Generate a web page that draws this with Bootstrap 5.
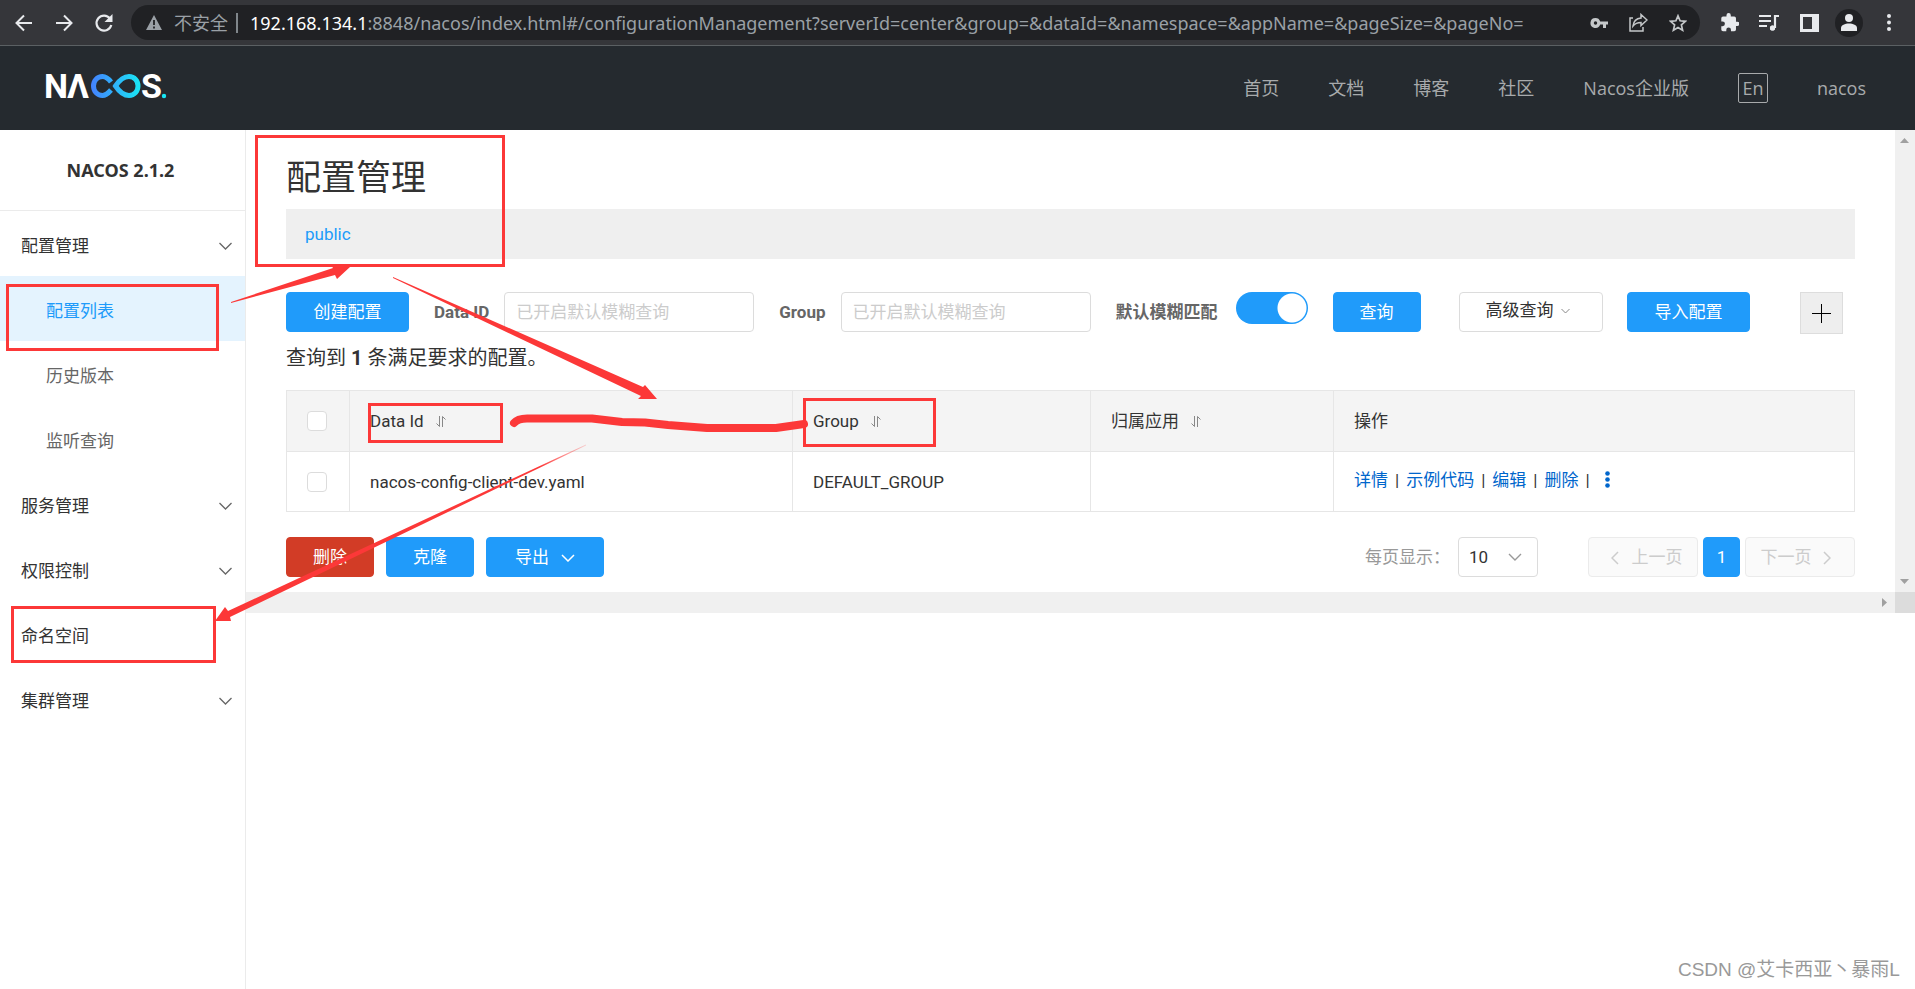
<!DOCTYPE html>
<html lang="zh-CN">
<head>
<meta charset="utf-8">
<meta name="viewport" content="width=device-width, initial-scale=1">
<title>Nacos</title>
<link href="https://cdn.jsdelivr.net/npm/bootstrap@5.3.0/dist/css/bootstrap.min.css" rel="stylesheet">
<style>
  :root { --brand: #209bfa; --line: #e6e6e6; }
  body { font-family: Roboto, "Noto Sans CJK SC", sans-serif; font-size: 17px; line-height: 24px; color: #333; background: #fff; }
  a { text-decoration: none; }
  svg { display: block; flex: none; }

  /* browser toolbar */
  .toolbar { height: 46px; background: #35363a; border-bottom: 1px solid #5b6063; color: #e8eaed; padding: 5px 24px 5px 14px; font-family: "Noto Sans", "Noto Sans CJK SC", sans-serif; }
  .toolbar button { background: none; border: 0; padding: 0; color: inherit; }
  .omnibox { height: 35px; border-radius: 18px; background: #202124; color: #9aa0a6; padding: 0 13px 0 15px; margin-left: 17px; font-size: 18px; }
  .omnibox .host { color: #fff; }
  .omnibox .sep { width: 2px; height: 20px; background: #80868b; }
  .omni-icons { gap: 21px; }
  .avatar { width: 28px; height: 28px; background: #202124; }

  /* site header */
  .site-head { height: 84px; background: #252a2f; padding: 0 49px 0 41px; }
  .site-head a, .site-head button { color: #a8aaac; font-size: 18px; font-family: "Open Sans", "Noto Sans CJK SC", sans-serif; white-space: nowrap; }
  .site-head .site-nav { gap: 49px; }
  .lang-btn { width: 30px; height: 30px; border: 1px solid #a8aaac; border-radius: 2px; background: none; padding: 0; line-height: 26px; }

  /* side menu */
  .side { width: 246px; flex: none; border-right: 1px solid #ebebeb; }
  .side h1 { height: 81px; margin: 0; padding-right: 4px; border-bottom: 1px solid #ebebeb; font: 700 18px "Noto Sans", sans-serif; }
  .side a { height: 65px; padding: 4px 13px 0 21px; color: #333; }
  .side a.sub { padding-left: 46px; color: #666; }
  .side a.active { background: #e4f3fe; color: var(--brand); }

  /* content */
  .pane { flex: 1 1 0; min-width: 0; padding: 29px 40px 15px; }
  .pane h2 { font-size: 35px; line-height: 40px; margin: 0 0 10px; font-weight: 400; }
  .ns-bar { height: 50px; background: #efefef; padding: 0 19px; margin-bottom: 33px; }
  .ns-bar a { color: var(--brand); }
  .btn { --bs-btn-font-size: 17px; --bs-btn-border-radius: 4px; --bs-btn-padding-y: 0; --bs-btn-padding-x: 0; height: 40px; padding-top: 2px; white-space: nowrap; }
  .btn-blue { --bs-btn-bg: #209bfa; --bs-btn-color: #fff; --bs-btn-border-color: #209bfa; --bs-btn-hover-bg: #1284dc; --bs-btn-hover-color: #fff; }
  .btn-red { --bs-btn-bg: #d23c26; --bs-btn-color: #fff; --bs-btn-border-color: #d23c26; --bs-btn-hover-bg: #b7321e; --bs-btn-hover-color: #fff; }
  .btn-plain { --bs-btn-bg: #fff; --bs-btn-color: #333; --bs-btn-border-color: #dcdcdc; padding: 0 6px 2px 0; }
  .w-short { width: 88px; }
  .w-mid { width: 118px; }
  .w-long { width: 123px; }
  .w-drop { width: 144px; }
  .field-label { color: #666; font-weight: 700; white-space: nowrap; margin: 0 15px 0 25px; }
  .field { width: 250px; height: 40px; border: 1px solid #dcdcdc; border-radius: 4px; padding: 0 11px; font-size: 17px; }
  .field::placeholder { color: #ccc; opacity: 1; }
  .form-check-input.fuzzy { width: 72px; height: 32px; margin: 0 25px 0 3px; border: 0; border-radius: 16px; flex: none;
    background: radial-gradient(circle at 56px 16px, #fff 14px, transparent 15px) var(--brand); }
  .plus-btn { width: 43px; height: 42px; margin: 0 12px 0 50px; background: #eee; border: 1px solid #ddd; padding: 0; }
  .found { font-size: 20px; line-height: 30px; margin: 9px 0 17px; }

  .grid-table { table-layout: fixed; border: 1px solid var(--line); margin: 0 0 25px; }
  .grid-table th, .grid-table td { height: 60px; padding: 0 20px; font-weight: 400; vertical-align: middle; border: 1px solid var(--line); color: #333; }
  .grid-table thead th { background: #f4f4f4; height: 61px; }
  .grid-table a { color: #06c; }
  .grid-table .form-check-input { width: 20px; height: 20px; margin: 0; border: 1px solid #dcdcdc; border-radius: 4px; display: block; }
  .c-check { width: 63px; } .c-id { width: 443px; } .c-group { width: 298px; } .c-app { width: 243px; }
  .row-actions { gap: 7px; }

  .batch { gap: 12px; }
  .with-icon { gap: 12px; }
  .size-label { color: #999; }
  .size-select { width: 80px; height: 40px; border: 1px solid #dcdcdc; border-radius: 4px; padding: 0 10px; margin: 0 50px 0 8px; color: #333; font-size: 17px;
    background: #fff url("data:image/svg+xml,%3Csvg xmlns='http://www.w3.org/2000/svg' width='14' height='8' fill='none' stroke='%23999' stroke-width='1.4'%3E%3Cpath d='M1 1l6 6 6-6'/%3E%3C/svg%3E") no-repeat right 15px center; appearance: none; }
  .pages { gap: 5px; }
  .pages .btn-step { width: 110px; --bs-btn-disabled-bg: #fafafa; --bs-btn-disabled-color: #ccc; --bs-btn-disabled-border-color: #ebebeb; --bs-btn-disabled-opacity: 1; }
  .pages .step-prev { padding-left: 8px; }
  .pages .step-next { padding-right: 8px; }
  .pages .btn-page { width: 37px; }

  .vbar { width: 20px; flex: none; background: #f0f0f0; padding: 8px 0; color: #a0a0a0; }
  .hbar { height: 21px; background: #f0f0f0; color: #a0a0a0; }
  .corner { width: 20px; background: #dcdcdc; }
  .watermark { color: #999; font-family: "Liberation Sans", "Noto Sans CJK SC", sans-serif; font-size: 19px; padding: 0 15px 7px; }
  .notes { position: absolute; left: 0; top: 0; pointer-events: none; }
</style>
</head>
<body class="d-flex flex-column min-vh-100 position-relative">

<div class="toolbar d-flex align-items-center">
  <button aria-label="后退"><svg width="20" height="20" viewBox="0 0 20 20" fill="none" stroke="currentColor" stroke-width="2"><path d="M18 10H3M10 2.500 2.500 10 10 17.500"/></svg></button>
  <button aria-label="前进" class="ms-3 ps-1"><svg width="20" height="20" viewBox="0 0 20 20" fill="none" stroke="currentColor" stroke-width="2"><path d="M2 10H17M10 2.500 17.500 10 10 17.500"/></svg></button>
  <button aria-label="刷新" class="ms-3 ps-1"><svg width="20" height="20" viewBox="0 0 20 20"><path d="M16 5.500A7.500 7.500 0 1 0 17.300 12" fill="none" stroke="currentColor" stroke-width="2.200"/><path d="M18.500 1v8h-8z" fill="currentColor"/></svg></button>
  <div class="omnibox d-flex align-items-center flex-grow-1">
    <svg width="16" height="15" viewBox="0 0 16 15"><path d="M8 0l8 15H0z" fill="#9aa0a6"/><path d="M8 5v5M8 11.500v2" stroke="#202124" stroke-width="1.800"/></svg>
    <span class="ms-2 ps-1 text-nowrap">不安全</span><span class="sep mx-2"></span>
    <span class="flex-grow-1 text-nowrap ps-1"><span class="host">192.168.134.1</span>:8848/nacos/index.html#/configurationManagement?serverId=center&amp;group=&amp;dataId=&amp;namespace=&amp;appName=&amp;pageSize=&amp;pageNo=</span>
    <div class="omni-icons d-flex align-items-center">
      <svg width="18" height="12" viewBox="0 0 18 12"><path d="M5.500 1a5 5 0 1 0 4.700 6.600H13V11h3V7.600h2V4.400h-7.800A5 5 0 0 0 5.500 1zm0 3.300a1.700 1.700 0 1 1 0 3.400 1.700 1.700 0 0 1 0-3.400z" fill="#c4c7c9"/></svg>
      <svg width="19" height="19" viewBox="0 0 19 19" fill="none" stroke="#c4c7c9" stroke-width="1.500"><path d="M4 5H1v13h13v-4M12 1.500l6 5.500-6 5.500V9.500c-4 0-6 1-8 3.500.500-4.500 3-7.500 8-8z"/></svg>
      <svg width="18" height="18" viewBox="0 0 18 18" fill="none" stroke="#c4c7c9" stroke-width="1.700"><path d="M9 1.800l2.100 5 5.400.5-4.100 3.600 1.200 5.300L9 13.400l-4.600 2.800 1.200-5.300L1.500 7.300l5.400-.5z"/></svg>
    </div>
  </div>
  <div class="d-flex align-items-center ms-3">
    <svg class="ms-1 me-1" width="19" height="19" viewBox="1 1 21 22" fill="currentColor"><path d="M20.500 11H19V7a2 2 0 0 0-2-2h-4V3.500a2.500 2.500 0 0 0-5 0V5H4a2 2 0 0 0-2 2v3.800h1.500a2.700 2.700 0 0 1 0 5.400H2V20a2 2 0 0 0 2 2h3.800v-1.500a2.700 2.700 0 0 1 5.400 0V22H17a2 2 0 0 0 2-2v-4h1.500a2.500 2.500 0 0 0 0-5z"/></svg>
    <svg class="ms-3 me-1" width="21" height="18" viewBox="0 0 21 18" fill="none" stroke="currentColor" stroke-width="2.200"><path d="M0 2h12M0 7h12M0 12h8M20 2h-4v12"/><circle cx="13.500" cy="14" r="2.500" fill="currentColor" stroke="none"/><circle cx="13.500" cy="14" r="1.500"/></svg>
    <svg class="ms-3" width="19" height="18" viewBox="0 0 19 18"><path d="M0 0h19v18H0zM3 3v12h9V3z" fill="currentColor" fill-rule="evenodd"/></svg>
    <span class="avatar rounded-circle d-flex align-items-center justify-content-center ms-3"><svg width="16" height="17" viewBox="0 0 16 17" fill="currentColor"><circle cx="8" cy="4" r="4"/><path d="M0 17v-3c0-3 4-4.500 8-4.500s8 1.500 8 4.500v3z"/></svg></span>
    <svg class="ms-4" width="4" height="17" viewBox="0 0 4 17" fill="currentColor"><circle cx="2" cy="2" r="2"/><circle cx="2" cy="8.500" r="2"/><circle cx="2" cy="15" r="2"/></svg>
  </div>
</div>

<header class="site-head d-flex align-items-center justify-content-between">
  <a href="#" aria-label="Nacos">
    <svg width="132" height="48" viewBox="-4 -8 132 48" font-family="Roboto, sans-serif" font-weight="700" font-size="34" fill="#fff">
      <defs><linearGradient id="loop" gradientUnits="userSpaceOnUse" x1="46" y1="0" x2="96" y2="0"><stop offset="0" stop-color="#4481ff"/><stop offset="1" stop-color="#18e8f4"/></linearGradient></defs>
      <text x="-1" y="26">N</text><text x="22" y="26">Λ</text>
      <path d="M66 10C63 6 61 4.500 57.500 4.500 52 4.500 48.500 9 48.500 14s3.500 9.500 9 9.500c3.500 0 5.500-2 8.500-5.500M70.500 14C74.500 8 78 4.500 84 4.500c5.500 0 9 4.500 9 9.500s-3.500 9.500-9 9.500c-6 0-9.500-3.500-13.500-9.500z" fill="none" stroke="url(#loop)" stroke-width="5"/>
      <text x="96" y="26">S</text><circle cx="119" cy="24" r="2.200" fill="#18e8f4"/>
    </svg>
  </a>
  <nav class="site-nav d-flex align-items-center">
    <a href="#">首页</a><a href="#">文档</a><a href="#">博客</a><a href="#">社区</a><a href="#">Nacos企业版</a>
    <button class="lang-btn">En</button>
    <a href="#">nacos</a>
  </nav>
</header>

<div class="d-flex flex-grow-1">
  <nav class="side">
    <h1 class="d-flex align-items-center justify-content-center">NACOS 2.1.2</h1>
    <a href="#" class="d-flex align-items-center justify-content-between">配置管理<svg width="13" height="8" fill="none" stroke="#666" stroke-width="1.300"><path d="M.5 1l6 6 6-6"/></svg></a>
    <a href="#" class="sub active d-flex align-items-center">配置列表</a>
    <a href="#" class="sub d-flex align-items-center">历史版本</a>
    <a href="#" class="sub d-flex align-items-center">监听查询</a>
    <a href="#" class="d-flex align-items-center justify-content-between">服务管理<svg width="13" height="8" fill="none" stroke="#666" stroke-width="1.300"><path d="M.5 1l6 6 6-6"/></svg></a>
    <a href="#" class="d-flex align-items-center justify-content-between">权限控制<svg width="13" height="8" fill="none" stroke="#666" stroke-width="1.300"><path d="M.5 1l6 6 6-6"/></svg></a>
    <a href="#" class="d-flex align-items-center">命名空间</a>
    <a href="#" class="d-flex align-items-center justify-content-between">集群管理<svg width="13" height="8" fill="none" stroke="#666" stroke-width="1.300"><path d="M.5 1l6 6 6-6"/></svg></a>
  </nav>

  <div class="d-flex flex-column flex-grow-1">
    <div class="d-flex">
      <main class="pane">
        <h2>配置管理</h2>
        <div class="ns-bar d-flex align-items-center"><a href="#">public</a></div>

        <form class="d-flex align-items-start">
          <button type="button" class="btn btn-blue w-long">创建配置</button>
          <label class="field-label pt-2" for="dataId">Data ID</label>
          <input class="field" id="dataId" placeholder="已开启默认模糊查询">
          <label class="field-label pt-2" for="group">Group</label>
          <input class="field" id="group" placeholder="已开启默认模糊查询">
          <label class="field-label pt-2" for="fuzzy">默认模糊匹配</label>
          <input class="form-check-input fuzzy" type="checkbox" role="switch" id="fuzzy" checked>
          <button type="button" class="btn btn-blue w-short">查询</button>
          <button type="button" class="btn btn-plain w-drop d-flex align-items-center justify-content-center gap-2 ms-auto me-4">高级查询<svg width="9" height="6" fill="none" stroke="#888"><path d="M.5 1l4 4 4-4"/></svg></button>
          <button type="button" class="btn btn-blue w-long">导入配置</button>
          <button type="button" class="plus-btn d-flex align-items-center justify-content-center" aria-label="新增"><svg width="19" height="19" stroke="#000"><path d="M0 9.500h19M9.500 0v19"/></svg></button>
        </form>

        <p class="found">查询到 <strong>1</strong> 条满足要求的配置。</p>

        <table class="table grid-table">
          <colgroup><col class="c-check"><col class="c-id"><col class="c-group"><col class="c-app"><col></colgroup>
          <thead>
            <tr>
              <th><input class="form-check-input" type="checkbox" aria-label="全选"></th>
              <th><span class="d-flex align-items-center gap-2">Data Id <svg class="ms-1" width="10" height="11" fill="none" stroke="#888"><path d="M.5 7.500l3 3V0M6.500 11V.5l3 3"/></svg></span></th>
              <th><span class="d-flex align-items-center gap-2">Group <svg class="ms-1" width="10" height="11" fill="none" stroke="#888"><path d="M.5 7.500l3 3V0M6.500 11V.5l3 3"/></svg></span></th>
              <th><span class="d-flex align-items-center gap-2">归属应用 <svg class="ms-1" width="10" height="11" fill="none" stroke="#888"><path d="M.5 7.500l3 3V0M6.500 11V.5l3 3"/></svg></span></th>
              <th>操作</th>
            </tr>
          </thead>
          <tbody>
            <tr>
              <td><input class="form-check-input" type="checkbox" aria-label="选择"></td>
              <td>nacos-config-client-dev.yaml</td>
              <td>DEFAULT_GROUP</td>
              <td></td>
              <td><span class="row-actions d-flex align-items-center text-nowrap pb-1"><a href="#">详情</a><span>|</span><a href="#">示例代码</a><span>|</span><a href="#">编辑</a><span>|</span><a href="#">删除</a><span>|</span><a href="#" class="ms-2" aria-label="更多"><svg width="5" height="17" fill="#06c"><circle cx="2.500" cy="2.500" r="2.300"/><circle cx="2.500" cy="8.500" r="2.300"/><circle cx="2.500" cy="14.500" r="2.300"/></svg></a></span></td>
            </tr>
          </tbody>
        </table>

        <div class="d-flex align-items-center justify-content-between">
          <div class="batch d-flex">
            <button type="button" class="btn btn-red w-short">删除</button>
            <button type="button" class="btn btn-blue w-short">克隆</button>
            <button type="button" class="btn btn-blue w-mid with-icon d-flex align-items-center justify-content-center">导出<svg width="14" height="8" fill="none" stroke="#fff" stroke-width="1.500"><path d="M1 1l6 6 6-6"/></svg></button>
          </div>
          <div class="d-flex align-items-center">
            <label for="pageSize" class="size-label">每页显示：</label>
            <select id="pageSize" class="size-select"><option>10</option></select>
            <div class="pages d-flex">
              <button type="button" class="btn btn-step step-prev with-icon d-flex align-items-center justify-content-center" disabled><svg width="8" height="14" fill="none" stroke="#ccc" stroke-width="1.500"><path d="M7 1L1 7l6 6"/></svg>上一页</button>
              <button type="button" class="btn btn-blue btn-page">1</button>
              <button type="button" class="btn btn-step step-next with-icon d-flex align-items-center justify-content-center" disabled>下一页<svg width="8" height="14" fill="none" stroke="#ccc" stroke-width="1.500"><path d="M1 1l6 6-6 6"/></svg></button>
            </div>
          </div>
        </div>
      </main>
      <div class="vbar d-flex flex-column align-items-center justify-content-between">
        <svg width="9" height="5" fill="currentColor"><path d="M0 5L4.500 0 9 5z"/></svg>
        <svg width="9" height="5" fill="currentColor"><path d="M0 0l4.500 5L9 0z"/></svg>
      </div>
    </div>
    <div class="hbar d-flex">
      <div class="flex-grow-1 d-flex align-items-center justify-content-end pe-2"><svg width="5" height="9" fill="currentColor"><path d="M0 0l5 4.500L0 9z"/></svg></div>
      <div class="corner"></div>
    </div>
    <div class="watermark mt-auto text-end">CSDN @艾卡西亚丶暴雨L</div>
  </div>
</div>

<!-- hand-drawn notes over the console -->
<svg class="notes" width="960" height="680" fill="none" stroke="#fc3838" stroke-width="3">
  <defs><linearGradient id="fade" gradientUnits="userSpaceOnUse" x1="586" y1="445" x2="540" y2="468"><stop offset="0" stop-color="#fc3838" stop-opacity=".2"/><stop offset="1" stop-color="#fc3838"/></linearGradient></defs>
  <path d="M256.500 136.500h247v129h-247zM7.500 285.500h210v64h-210zM12.500 607.500h202v54h-202zM369.500 404.500h132v37h-132zM804.500 399.500h130v46h-130z"/>
  <path d="M514 423Q518 418 529 418.500L592 418.500 622 422 645 422.500 668 425 707 428 776 428 804 424" stroke-width="8" stroke-linecap="round" stroke-linejoin="round"/>
  <g stroke="none" fill="#fc3838">
    <path d="M231 302L333 268 331 265 350 267 337 279 335 275 231 303z"/>
    <path d="M393 277L643 387 645 385 657 399 638 399 641 396 393 278z"/>
    <path fill="url(#fade)" d="M586 444.500L228 611 225 607 215 621 231 621 230 617 586 445.500z"/>
  </g>
</svg>

<script src="https://cdn.jsdelivr.net/npm/bootstrap@5.3.0/dist/js/bootstrap.bundle.min.js"></script>
</body>
</html>
